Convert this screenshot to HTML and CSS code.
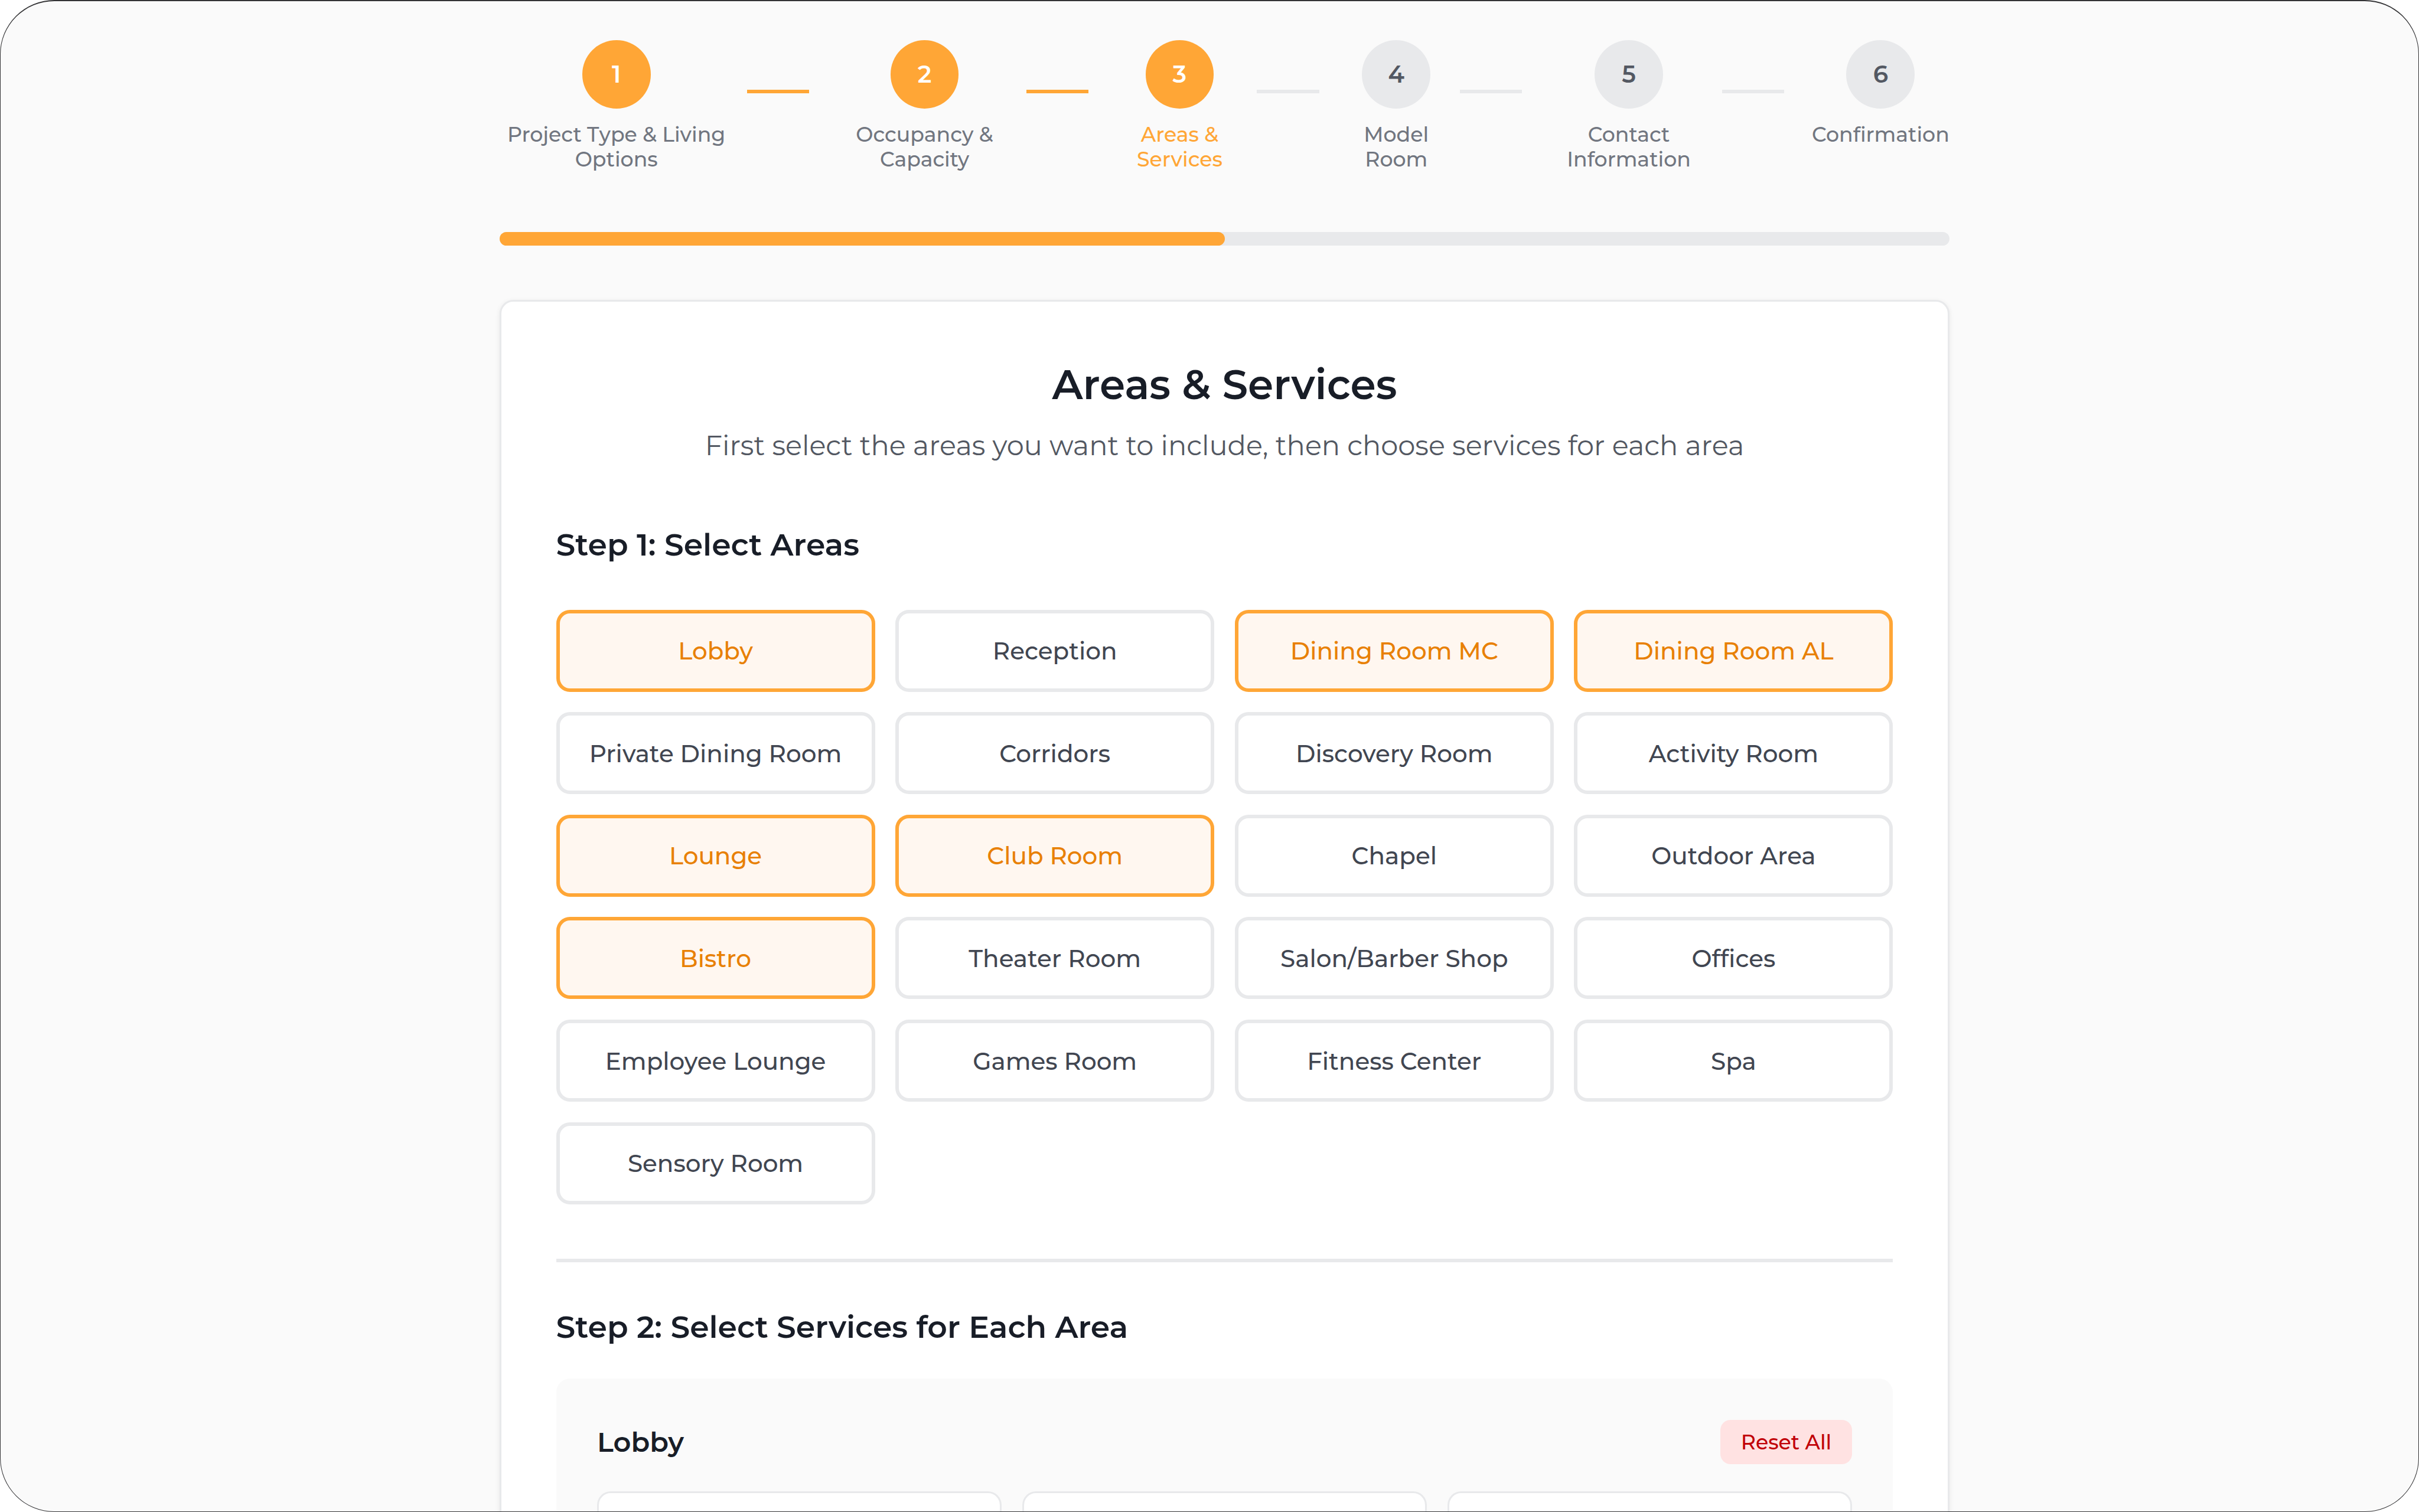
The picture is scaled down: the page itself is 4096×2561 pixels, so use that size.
FILE: index.html
```
<!DOCTYPE html>
<html lang="en">
<head>
  <meta charset="UTF-8">
  <meta name="viewport" content="width=device-width, initial-scale=1.0">
  <title>Areas &amp; Services</title>
  <link rel="stylesheet" href="styles.css">
</head>
<body>
  <div class="window">
    <main class="container">
      <div class="stepper">
        <div class="step step-1 done">
          <div class="circle">1</div>
          <div class="label">Project Type &amp; Living<br>Options</div>
        </div>
        <div class="line done"></div>
        <div class="step step-2 done">
          <div class="circle">2</div>
          <div class="label">Occupancy &amp;<br>Capacity</div>
        </div>
        <div class="line done"></div>
        <div class="step step-3 done current">
          <div class="circle">3</div>
          <div class="label">Areas &amp;<br>Services</div>
        </div>
        <div class="line"></div>
        <div class="step step-4">
          <div class="circle">4</div>
          <div class="label">Model<br>Room</div>
        </div>
        <div class="line"></div>
        <div class="step step-5">
          <div class="circle">5</div>
          <div class="label">Contact<br>Information</div>
        </div>
        <div class="line"></div>
        <div class="step step-6">
          <div class="circle">6</div>
          <div class="label">Confirmation</div>
        </div>
      </div>

      <div class="progress">
        <div class="progress-fill" style="width: 50%"></div>
      </div>

      <section class="card">
        <h1>Areas &amp; Services</h1>
        <p class="subtitle">First select the areas you want to include, then choose services for each area</p>

        <h2>Step 1: Select Areas</h2>
        <div class="areas">
          <button class="area selected">Lobby</button>
          <button class="area">Reception</button>
          <button class="area selected">Dining Room MC</button>
          <button class="area selected">Dining Room AL</button>
          <button class="area">Private Dining Room</button>
          <button class="area">Corridors</button>
          <button class="area">Discovery Room</button>
          <button class="area">Activity Room</button>
          <button class="area selected">Lounge</button>
          <button class="area selected">Club Room</button>
          <button class="area">Chapel</button>
          <button class="area">Outdoor Area</button>
          <button class="area selected">Bistro</button>
          <button class="area">Theater Room</button>
          <button class="area">Salon/Barber Shop</button>
          <button class="area">Offices</button>
          <button class="area">Employee Lounge</button>
          <button class="area">Games Room</button>
          <button class="area">Fitness Center</button>
          <button class="area">Spa</button>
          <button class="area">Sensory Room</button>
        </div>

        <div class="services">
          <h2 class="services-title">Step 2: Select Services for Each Area</h2>
          <div class="panel">
            <div class="panel-head">
              <h3>Lobby</h3>
              <button class="reset">Reset All</button>
            </div>
            <div class="options">
              <div class="option"></div>
              <div class="option"></div>
              <div class="option"></div>
            </div>
          </div>
        </div>
      </section>
    </main>
  </div>
</body>
</html>
```
FILE: styles.css
```
* {
  box-sizing: border-box;
}

html {
  font-size: 46.3px;
}

body {
  margin: 0;
  height: 100vh;
  overflow: hidden;
  background: #fff;
  font-family: Montserrat, Inter, sans-serif;
  color: #181d27;
}

h1, h2, h3, p {
  margin: 0;
}

button {
  font-family: inherit;
  cursor: pointer;
}

.window {
  height: 100vh;
  overflow: hidden;
  background: #fafafa;
  border: 1px solid #333335;
  border-top-width: 2px;
  border-radius: 92px;
}

.container {
  width: 2455px;
  margin-left: 845px;
  padding-top: 66px;
}

/* stepper */
.stepper {
  display: flex;
  height: 324.5px;
}

.step {
  display: flex;
  flex-direction: column;
  align-items: center;
  flex-shrink: 0;
}

.step-1 { width: 395.4px; }
.step-2 { width: 345px; }
.step-3 { width: 262px; }
.step-4 { width: 214.8px; }
.step-5 { width: 316px; }
.step-6 { width: 233.4px; }

.circle {
  display: flex;
  align-items: center;
  justify-content: center;
  width: 2.5rem;
  height: 2.5rem;
  border-radius: 50%;
  background: #e8e9eb;
  color: #535862;
  font-size: 0.875rem;
  font-weight: 600;
}

.label {
  margin-top: 0.5rem;
  font-size: 0.75rem;
  line-height: 0.9rem;
  font-weight: 500;
  text-align: center;
  white-space: nowrap;
  color: #717680;
}

.done .circle {
  background: #ffa636;
  color: #fff;
}

.current .label {
  color: #ffa636;
}

.line {
  flex-shrink: 0;
  width: 105.3px;
  height: 0.125rem;
  margin-top: 84px;
  margin-right: 0.5rem;
  background: #e8e9eb;
}

.line.done {
  background: #ffa636;
}

.step-1 + .line {
  margin-left: 0.5rem;
}

.step-5 + .line {
  margin-right: 1rem;
}

/* progress bar */
.progress {
  height: 0.5rem;
  border-radius: 0.25rem;
  background: #e8e9eb;
}

.progress-fill {
  height: 100%;
  border-radius: 0.25rem;
  background: #ffa636;
}

/* card */
.card {
  height: 2200px;
  margin-top: 2rem;
  padding: 2rem;
  border: 3px solid #e8e9eb;
  border-radius: 0.5rem;
  background: #fff;
  box-shadow: 0 0.0625rem 0.1875rem rgba(0, 0, 0, 0.08);
}

h1 {
  margin-top: 1px;
  font-size: 1.5rem;
  line-height: 2rem;
  font-weight: 600;
  text-align: center;
}

.subtitle {
  margin-top: 23px;
  font-size: 1rem;
  line-height: 1.5rem;
  font-weight: 400;
  text-align: center;
  color: #535862;
}

h2 {
  font-size: 1.125rem;
  line-height: 1.5rem;
  font-weight: 600;
}

.subtitle + h2 {
  margin-top: 98px;
}

.areas {
  display: grid;
  grid-template-columns: repeat(4, 1fr);
  gap: 0.75rem;
  margin-top: 75.3px;
}

.area {
  height: 3rem;
  padding: 1px 0 0;
  border: 6px solid #e8e9eb;
  border-radius: 0.5rem;
  background: #fff;
  color: #414651;
  font-size: 0.875rem;
  font-weight: 500;
}

.area.selected {
  border-color: #ffa636;
  background: #fff7f0;
  color: #e88003;
}

.services {
  margin-top: 2rem;
  border-top: 6px solid #e8e9eb;
}

.services-title {
  margin-top: 75px;
}

.panel {
  margin-top: 52.5px;
  padding: 1.5rem;
  height: 600px;
  border-radius: 0.5rem;
  background: #fafafa;
}

.panel-head {
  display: flex;
  justify-content: space-between;
  align-items: center;
}

h3 {
  font-size: 1rem;
  font-weight: 600;
}

.reset {
  width: 223px;
  height: 1.625rem;
  padding: 1px 0 0;
  border: none;
  border-radius: 0.375rem;
  background: #ffe2e2;
  color: #c10007;
  font-size: 0.75rem;
  font-weight: 500;
}

.options {
  display: grid;
  grid-template-columns: repeat(3, 1fr);
  gap: 0.75rem;
  margin-top: 1rem;
}

.option {
  height: 3rem;
  border: 3px solid #e8e9eb;
  border-radius: 0.5rem;
  background: #fff;
}
```
